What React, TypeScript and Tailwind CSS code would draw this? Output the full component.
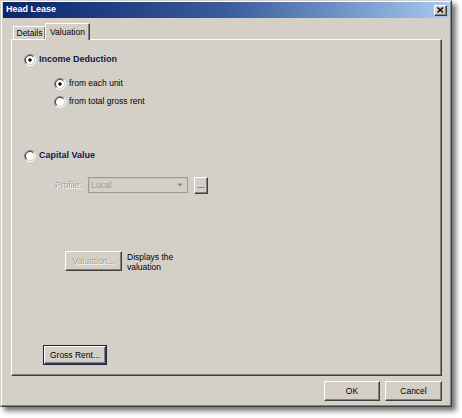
const raised =
  "border border-t-white border-l-white border-r-[#404040] border-b-[#404040] shadow-[inset_-1px_-1px_0_#808080]";

function Radio({ checked, disabled }: { checked?: boolean; disabled?: boolean }) {
  return (
    <svg width="12" height="12" viewBox="0 0 12 12" className="shrink-0">
      <path d="M9.9 2.1A5.5 5.5 0 0 0 2.1 9.9" fill="none" stroke="#808080" />
      <path d="M9.9 2.1A5.5 5.5 0 0 1 2.1 9.9" fill="none" stroke="#ffffff" />
      <circle cx="6" cy="6" r="4.5" fill={disabled ? "#d4d0c8" : "#ffffff"} />
      <path d="M9.2 2.8A4.5 4.5 0 0 0 2.8 9.2" fill="none" stroke="#404040" />
      <path d="M9.2 2.8A4.5 4.5 0 0 1 2.8 9.2" fill="none" stroke="#d4d0c8" />
      {checked && <circle cx="6" cy="6" r="1.7" fill="#000000" />}
    </svg>
  );
}

function Button({
  label,
  className,
  disabled,
  focused,
}: {
  label: string;
  className: string;
  disabled?: boolean;
  focused?: boolean;
}) {
  const inner = (
    <div
      className={`${raised} flex h-full w-full items-center justify-center ${
        disabled ? "text-[#a19d95] [text-shadow:1px_1px_0_#ffffff]" : "text-black"
      }`}
    >
      {label}
    </div>
  );
  if (focused) {
    return <div className={`${className} border border-[#1f2240]`}>{inner}</div>;
  }
  return <div className={className}>{inner}</div>;
}

export default function App() {
  return (
    <div
      className="h-[418px] w-[462px] overflow-hidden bg-white text-[8.5px] text-black"
      style={{ fontFamily: '"Liberation Sans", Arial, sans-serif' }}
    >
      <div className="h-[407px] w-[452px] border border-t-[#d4d0c8] border-l-[#d4d0c8] border-r-[#404040] border-b-[#404040] bg-[#d4d0c8] shadow-[4px_4px_5px_rgba(0,0,0,0.55)]">
        <div className="flex h-full flex-col border border-t-white border-l-white border-r-[#808080] border-b-[#808080] px-px">
          {/* title bar */}
          <div className="flex h-[16px] items-center justify-between bg-gradient-to-r from-[#0a246a] via-[#3a5c9c] to-[#a6caf0] pl-[3px] pr-[2px]">
            <span className="text-[9px] font-bold text-white">Head Lease</span>
            <div className={`${raised} flex h-[11px] w-[13px] items-center justify-center bg-[#d4d0c8]`}>
              <svg width="7" height="6" viewBox="0 0 7 6">
                <path d="M0.5 0.5L6 5.5M6 0.5L0.5 5.5" stroke="#000" strokeWidth="1.4" />
              </svg>
            </div>
          </div>

          {/* body */}
          <div className="flex flex-1 flex-col pl-[8px] pr-[7px] pt-[5px]">
            {/* tabs */}
            <div className="relative z-10 flex h-[16px] items-end pl-[2px]">
              <div className="flex h-[13px] w-[32px] items-center justify-center border-l border-t border-white shadow-[inset_-1px_0_0_#808080]">
                Details
              </div>
              <div className="-mb-px flex h-[17px] w-[45px] items-start justify-center border-l border-r border-t border-l-white border-t-white border-r-[#404040] bg-[#d4d0c8] pt-[2px] shadow-[inset_-1px_0_0_#808080]">
                Valuation
              </div>
            </div>

            {/* panel */}
            <div className="flex h-[337px] flex-col border border-t-white border-l-white border-r-[#404040] border-b-[#404040] pl-[12px] shadow-[inset_-1px_-1px_0_#808080]">
              <div className="mt-[13px] flex h-[13px] items-center gap-[3px]">
                <Radio checked />
                <span className="text-[9px] font-bold text-[#0f1a4f]">Income Deduction</span>
              </div>
              <div className="ml-[30px] mt-[11px] flex h-[13px] items-center gap-[3px]">
                <Radio checked />
                <span>from each unit</span>
              </div>
              <div className="ml-[30px] mt-[5px] flex h-[13px] items-center gap-[3px]">
                <Radio />
                <span>from total gross rent</span>
              </div>
              <div className="mt-[41px] flex h-[13px] items-center gap-[3px]">
                <Radio />
                <span className="text-[9px] font-bold text-[#0f1a4f]">Capital Value</span>
              </div>
              <div className="mt-[15px] flex h-[17px] items-start">
                <span className="ml-[31px] w-[33px] pt-[2px] text-[#a19d95] [text-shadow:1px_1px_0_#ffffff]">
                  Profile:
                </span>
                <div className="flex h-[16px] w-[100px] items-center border border-[#9d9a93] shadow-[inset_1px_1px_0_#c8c4bc]">
                  <span className="flex-1 pl-[2px] text-[#a19d95]">Local</span>
                  <svg width="14" height="14" viewBox="0 0 14 14">
                    <path d="M4 5.5h6L7 8.5z" fill="#8f8b84" />
                  </svg>
                </div>
                <Button label="..." className="ml-[6px] h-[17px] w-[14px] bg-[#d4d0c8]" />
              </div>
              <div className="ml-[41px] mt-[57px] flex items-start">
                <Button label="Valuation..." disabled className="h-[20px] w-[57px]" />
                <div className="ml-[5px] mt-[1px] leading-[10px]">
                  Displays the
                  <br />
                  valuation
                </div>
              </div>
              <Button
                label="Gross Rent..."
                focused
                className="ml-[19px] mt-[73px] h-[20px] w-[64px]"
              />
            </div>

            {/* footer */}
            <div className="mt-[5px] flex justify-end gap-[5px]">
              <Button label="OK" className="h-[20px] w-[56px]" />
              <Button label="Cancel" className="h-[20px] w-[57px]" />
            </div>
          </div>
        </div>
      </div>
    </div>
  );
}
